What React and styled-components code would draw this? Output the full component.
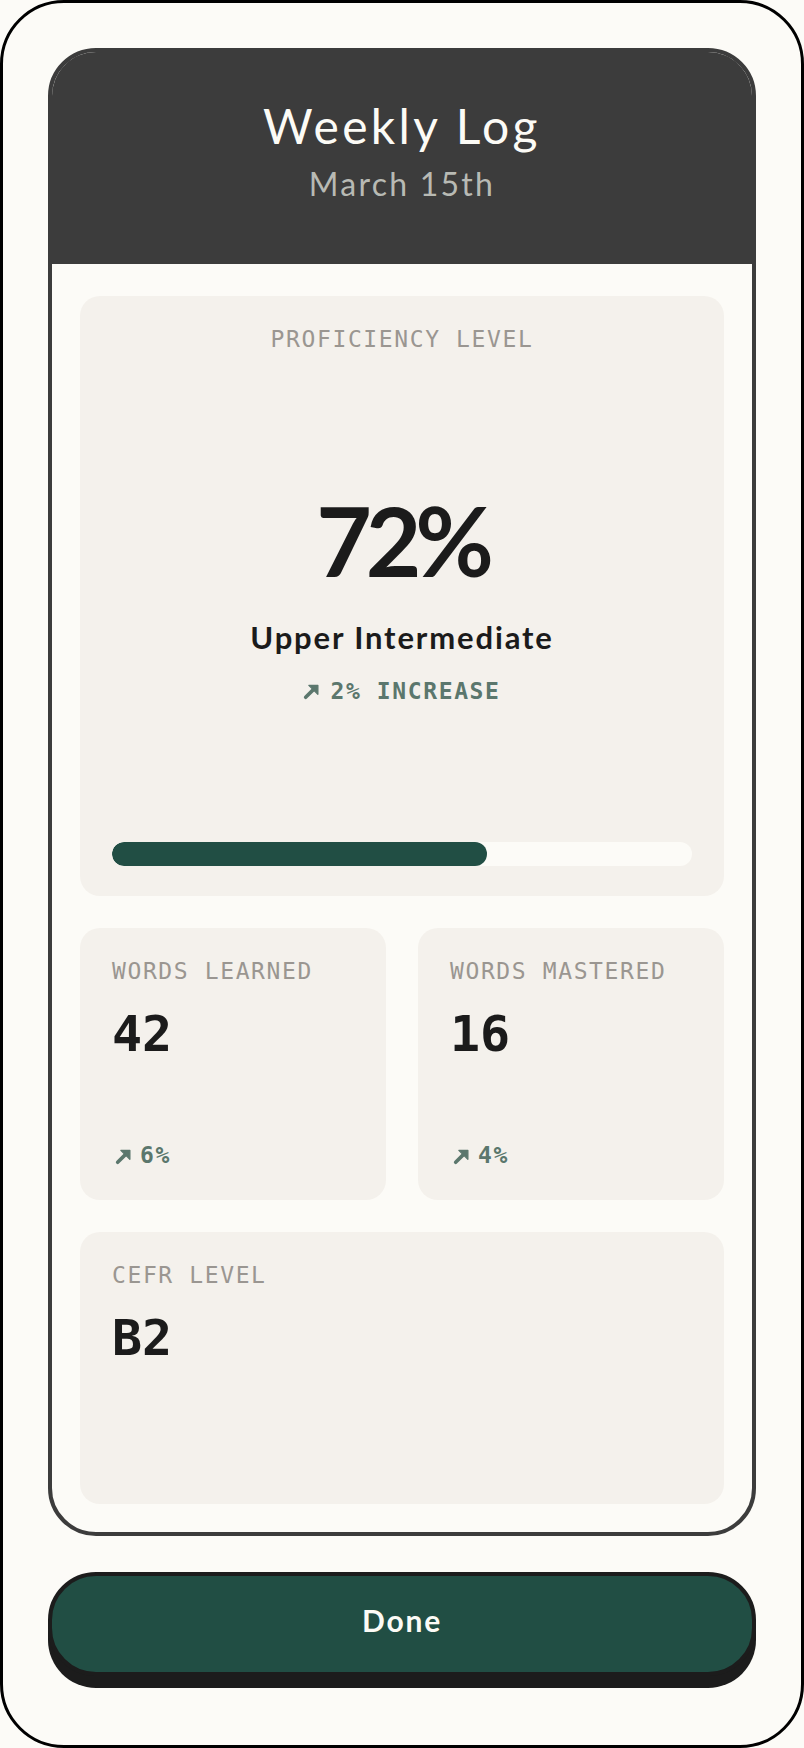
import React from 'react';
import styled, { createGlobalStyle } from 'styled-components';

const GlobalStyle = createGlobalStyle`
  html, body {
    margin: 0;
    padding: 0;
    background: #fcfbf7;
  }
  * {
    box-sizing: border-box;
  }
`;

const sans = `Lato, "Open Sans", sans-serif`;
const mono = `"DejaVu Sans Mono", "Liberation Mono", monospace`;

const Frame = styled.div`
  height: 1748px;
  border: 3px solid #000;
  border-radius: 64px;
  background: #fcfbf7;
  padding: 45px 45px 0;
  display: flex;
  flex-direction: column;
  gap: 36px;
`;

const LogCard = styled.section`
  border: 4px solid #3c3c3c;
  border-radius: 48px;
  overflow: hidden;
  background: #fcfbf7;
`;

const Header = styled.header`
  height: 212px;
  background: #3c3c3c;
  display: flex;
  flex-direction: column;
  align-items: center;
  padding-top: 45px;
  font-family: ${sans};
`;

const Title = styled.h1`
  margin: 0;
  font-size: 48px;
  font-weight: 400;
  line-height: 1.2;
  color: #fcfbf6;
  letter-spacing: 0.07em;
`;

const Subtitle = styled.div`
  margin-top: 10px;
  font-size: 32px;
  line-height: 1.2;
  letter-spacing: 0.07em;
  color: #b8bab4;
`;

const Body = styled.div`
  padding: 32px 28px 28px;
  display: flex;
  flex-direction: column;
  gap: 32px;
`;

const Tile = styled.div`
  background: #f4f1ec;
  border-radius: 20px;
  height: ${p => p.$h}px;
  padding: 30px 32px 30px;
  display: flex;
  flex-direction: column;
  align-items: ${p => (p.$center ? 'center' : 'flex-start')};
`;

const Row = styled.div`
  display: grid;
  grid-template-columns: 1fr 1fr;
  gap: 32px;
`;

const Label = styled.div`
  font-family: ${mono};
  font-size: 23px;
  line-height: 1.2;
  letter-spacing: 0.07em;
  color: #9a9691;
  text-transform: uppercase;
`;

const Value = styled.div`
  margin-top: 18px;
  font-family: ${mono};
  font-weight: 700;
  font-size: 50px;
  line-height: 1.2;
  color: #1b1b1b;
`;

const Delta = styled.div`
  margin-top: ${p => (p.$push ? 'auto' : '21px')};
  padding-left: ${p => (p.$push ? '3px' : '0')};
  display: flex;
  align-items: center;
  gap: ${p => (p.$push ? '8px' : '10px')};
  font-family: ${mono};
  font-weight: 700;
  font-size: 23px;
  line-height: 1.2;
  letter-spacing: 0.07em;
  color: #5b776d;
  white-space: pre;
`;

const Middle = styled.div`
  flex: 1;
  display: flex;
  flex-direction: column;
  align-items: center;
  justify-content: center;
`;

const Percent = styled.div`
  font-family: ${sans};
  font-weight: 700;
  font-size: 96px;
  line-height: 1;
  letter-spacing: -0.065em;
  color: #1b1b1b;
  padding-top: 2px;
`;

const Level = styled.div`
  margin-top: 31px;
  font-family: ${sans};
  font-weight: 700;
  font-size: 31px;
  line-height: 1.2;
  letter-spacing: 0.06em;
  color: #1b1b1b;
`;

const Track = styled.div`
  width: 100%;
  height: 24px;
  border-radius: 12px;
  background: #fcfbf7;
  overflow: hidden;
`;

const Fill = styled.div`
  height: 100%;
  border-radius: 12px;
  background: #214e44;
`;

const DoneButton = styled.button`
  height: 104px;
  flex-shrink: 0;
  border: 4px solid #1c1c1c;
  border-radius: 48px;
  background: #214e44;
  box-shadow: 0 12px 0 #1c1c1c;
  color: #fcfbf6;
  font-family: ${sans};
  font-weight: 700;
  font-size: 30px;
  letter-spacing: 0.06em;
  padding: 0 0 8px;
  cursor: pointer;
`;

const UpArrow = () => (
  <svg width="17" height="17" viewBox="0 0 16 16" aria-hidden="true">
    <path d="M2.5 13.5L10 6" stroke="currentColor" strokeWidth="3.4" strokeLinecap="round" fill="none" />
    <path d="M5.5 2.2H14V10.7Z" fill="currentColor" stroke="currentColor" strokeWidth="1.2" strokeLinejoin="round" />
  </svg>
);

const StatTile = ({ label, value, delta }) => (
  <Tile $h={272}>
    <Label>{label}</Label>
    <Value>{value}</Value>
    {delta && (
      <Delta $push>
        <UpArrow />
        {delta}
      </Delta>
    )}
  </Tile>
);

const App = () => {
  const progress = 64.6;
  return (
    <>
      <GlobalStyle />
      <Frame>
        <LogCard>
          <Header>
            <Title>Weekly Log</Title>
            <Subtitle>March 15th</Subtitle>
          </Header>
          <Body>
            <Tile $h={600} $center>
              <Label>Proficiency Level</Label>
              <Middle>
                <Percent>72%</Percent>
                <Level>Upper Intermediate</Level>
                <Delta>
                  <UpArrow />
                  2% INCREASE
                </Delta>
              </Middle>
              <Track>
                <Fill style={{ width: `${progress}%` }} />
              </Track>
            </Tile>
            <Row>
              <StatTile label="Words Learned" value="42" delta="6%" />
              <StatTile label="Words Mastered" value="16" delta="4%" />
            </Row>
            <StatTile label="CEFR Level" value="B2" />
          </Body>
        </LogCard>
        <DoneButton>Done</DoneButton>
      </Frame>
    </>
  );
};

export default App;
